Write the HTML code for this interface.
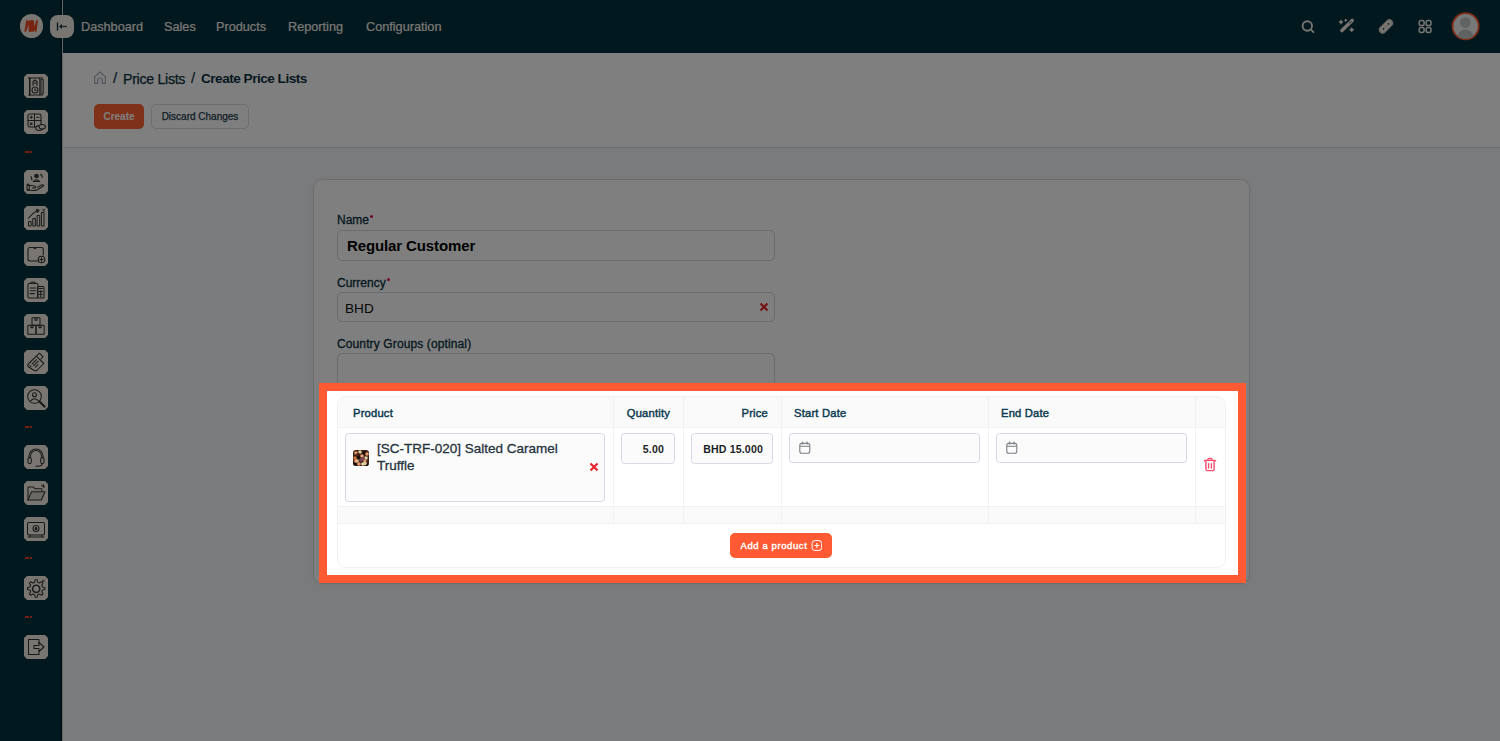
<!DOCTYPE html>
<html><head><meta charset="utf-8">
<style>
*{box-sizing:border-box;margin:0;padding:0}
html,body{width:1500px;height:741px;overflow:hidden;background:#f5f6f8;font-family:"Liberation Sans",sans-serif}
.abs{position:absolute}
#hdr{position:absolute;left:0;top:0;width:1500px;height:53px;background:#03303f}
#side{position:absolute;left:0;top:0;width:63px;height:741px;background:#03303f;border-right:1px solid #c4cdd1;box-shadow:inset -1.5px 0 0 rgba(0,0,0,0.35)}
.nav{position:absolute;top:20.2px;font-size:12.7px;color:#f2ede6;white-space:nowrap;-webkit-text-stroke:0.2px #f2ede6}
.tile{position:absolute;left:24px;width:24px;height:24px;background:#f3ede3;clip-path:polygon(3px 0,21px 0,24px 3px,24px 21px,21px 24px,3px 24px,0 21px,0 3px)}
.dash{position:absolute;left:25px;top:0;width:7px;height:2px;margin-top:0.5px;background:repeating-linear-gradient(90deg,#e0402a 0 1.8px,#5a2018 1.8px 2.4px)}
#crumbbar{position:absolute;left:63px;top:53px;width:1437px;height:95px;background:#fff;border-bottom:1px solid #dadce2}
.crumb{position:absolute;top:70px;font-size:13.5px;color:#0b3140;white-space:nowrap}
.btn{position:absolute;top:103.5px;height:25px;border-radius:5px;font-size:10px;line-height:22.5px;text-align:center;white-space:nowrap}
#card{position:absolute;left:313px;top:179px;width:937px;height:405px;border:1px solid #d6d9e0;border-radius:9px;background:#fff;box-shadow:0 1px 6px rgba(0,0,0,0.04)}
.lbl{position:absolute;left:337px;font-size:12px;color:#0b3140;white-space:nowrap;-webkit-text-stroke:0.3px #0b3140}
.req{position:absolute;width:3px;height:3px;border-radius:50%;background:#e0104a}
.inp{position:absolute;left:337px;width:438px;border:1px solid #d4d7dd;border-radius:5px;background:#fff}
#hl{position:absolute;left:319px;top:383px;width:927px;height:200px;border:8px solid #ff5a33;background:#fff;box-shadow:0 0 0 3000px rgba(0,0,0,0.5)}
#tbl{position:absolute;left:337px;top:396px;width:889px;height:172px;border:1px solid #eef0f3;border-radius:9px;background:#fff;overflow:hidden}
.vd{position:absolute;top:0;width:1px;height:127px;background:#f0f1f4}
.th{position:absolute;top:406.8px;font-size:11.2px;font-weight:normal;color:#0d3b4f;white-space:nowrap;-webkit-text-stroke:0.45px #0d3b4f;letter-spacing:0.2px}
.tin{position:absolute;border:1px solid #d5dae6;border-radius:3.5px;background:#fbfbfc}
.tv{top:442.6px;font-size:10.6px;font-weight:bold;color:#1b1f24;white-space:nowrap;letter-spacing:0.15px}
</style></head><body>
<div id="crumbbar"></div>
<div id="hdr"></div>
<div id="side"></div>
<div class="abs" style="left:19.5px;top:14.3px;width:23.5px;height:23.5px;border-radius:50%;background:#f3ede3"></div>
<svg class="abs" style="left:19px;top:14px" width="24" height="24" viewBox="0 0 24 24"><path d="M5.3 17.7L7.2 6.2H8.8L9.6 8.5V6.2H15V13L17.4 6.3H19L17.5 17.7H16L15 15.5V17.8H9.6V10.5L7 17.7z" fill="#ee4a20"/></svg>
<div class="abs" style="left:50px;top:14.5px;width:23.5px;height:23.5px;border-radius:8px;background:#f3ede3"></div>
<svg class="abs" style="left:50px;top:14px" width="24" height="24" viewBox="0 0 24 24"><path d="M7.5 8.5V16.5" stroke="#0f3346" stroke-width="1.4"/><path d="M9 12.5L12 10V15z" fill="#0f3346"/><path d="M11.5 12.5H17" stroke="#3a4a52" stroke-width="1.3"/></svg>
<div class="nav" style="left:81px">Dashboard</div>
<div class="nav" style="left:164px">Sales</div>
<div class="nav" style="left:216px">Products</div>
<div class="nav" style="left:288px">Reporting</div>
<div class="nav" style="left:366px">Configuration</div>
<svg class="abs" style="left:1290px;top:0px" width="210" height="53" viewBox="0 0 210 53">
<circle cx="17.3" cy="26" r="4.7" fill="none" stroke="#f0ebe4" stroke-width="1.9"/><path d="M20.9 29.6L23.5 32.2" stroke="#f0ebe4" stroke-width="1.8" stroke-linecap="round"/>
<path d="M51.9 30.6L62.2 20.4" stroke="#f0ebe4" stroke-width="3.5" stroke-linecap="round"/><path d="M60.9 21.6L59.4 23.1" stroke="#03303f" stroke-width="1" stroke-linecap="round"/>
<path d="M51 19.5Q51.728 21.372 53.6 22.1Q51.728 22.828000000000003 51 24.700000000000003Q50.272 22.828000000000003 48.4 22.1Q50.272 21.372 51 19.5z M55.7 18.5Q56.38 19.52 57.400000000000006 20.2Q56.38 20.88 55.7 21.9Q55.02 20.88 54.0 20.2Q55.02 19.52 55.7 18.5z M61.7 27.0Q62.484 29.016000000000002 64.5 29.8Q62.484 30.584 61.7 32.6Q60.916000000000004 30.584 58.900000000000006 29.8Q60.916000000000004 29.016000000000002 61.7 27.0z" fill="#f0ebe4"/>
<g transform="rotate(-45 96 26.4)"><rect x="87.5" y="22.6" width="17" height="7.6" rx="3.8" fill="#f0ebe4"/><rect x="88.2" y="23.3" width="15.6" height="6.2" rx="3.1" fill="none" stroke="#b9b4ad" stroke-width="0.6"/><circle cx="92.5" cy="26.4" r="0.8" fill="#03303f"/><circle cx="99.5" cy="26.4" r="0.8" fill="#03303f"/><path d="M94.5 26.4h3" stroke="#a8a39c" stroke-width="0.6"/></g>
<g fill="none" stroke="#f0ebe4" stroke-width="1.5"><rect x="129.2" y="20.6" width="4.9" height="4.9" rx="1.8"/><rect x="136.1" y="20.6" width="4.9" height="4.9" rx="1.8"/><rect x="129.2" y="27.5" width="4.9" height="4.9" rx="1.8"/><rect x="136.1" y="27.5" width="4.9" height="4.9" rx="1.8"/></g>
<defs><clipPath id="av"><circle cx="175.6" cy="26.3" r="12.8"/></clipPath></defs>
<circle cx="175.6" cy="26.3" r="13.1" fill="#eef1f1" stroke="#ff5a2e" stroke-width="1.8"/>
<g clip-path="url(#av)"><circle cx="175.3" cy="22.6" r="5.3" fill="#c2c5c5"/><ellipse cx="175.4" cy="37.5" rx="8" ry="8" fill="#c2c5c5"/></g>
</svg>

<div class="tile" style="top:74px"><svg class="abs" style="left:0px;top:0px" width="24" height="24" viewBox="0 0 24 24"><g fill="none" stroke="#333333" stroke-width="1.05" stroke-linecap="round" stroke-linejoin="round"><path d="M4.5 4H18.5M4.5 21H18.5"/><path d="M5.8 4V21" stroke-width="1.6"/><path d="M15.8 4V21"/><rect x="17" y="5" width="2.2" height="15" rx="1.1"/><circle cx="11" cy="16" r="3"/><path d="M11 14.5V16.2H12.3"/><path d="M9 11.5V7.5L11 6 13 7.5V11.5M9 9h4"/></g></svg></div><div class="tile" style="top:110px"><svg class="abs" style="left:0px;top:0px" width="24" height="24" viewBox="0 0 24 24"><g fill="none" stroke="#333333" stroke-width="1.05" stroke-linecap="round" stroke-linejoin="round"><rect x="4" y="4" width="13" height="13" rx="1.8"/><path d="M10.5 4V17M4 10.5H17M6.2 7.2h2.2M7.3 6.1v2.2M12.6 7.2h2.4M6.3 12.8l1.8 1.8M8.1 12.8l-1.8 1.8"/><ellipse cx="15.2" cy="18" rx="3.4" ry="2.4" fill="#f3ede3"/><ellipse cx="18.2" cy="16.8" rx="3.2" ry="2.3" fill="#f3ede3"/></g></svg></div><div class="tile" style="top:170px"><svg class="abs" style="left:0px;top:0px" width="24" height="24" viewBox="0 0 24 24"><g fill="none" stroke="#333333" stroke-width="1.05" stroke-linecap="round" stroke-linejoin="round"><circle cx="12.5" cy="6" r="1.8" fill="#333333"/><path d="M9.3 11.5q3.2-3.2 6.4 0H9.3z"/><path d="M16.5 4.2q2 1.2 1.7 3.2M7 6.5l1 3.5"/><path d="M4 15.5h3.5l3.5 .8q1.3.6.3 1.6H8.5"/><path d="M4 19.5q5 2 9.5.2l6.3-4.2q-.8-1.2-2.2-.6l-4 2.4"/><rect x="3" y="14" width="2.2" height="6.5" rx="1"/></g></svg></div><div class="tile" style="top:206px"><svg class="abs" style="left:0px;top:0px" width="24" height="24" viewBox="0 0 24 24"><g fill="none" stroke="#333333" stroke-width="1.05" stroke-linecap="round" stroke-linejoin="round"><rect x="4.5" y="15.5" width="2.6" height="4.5" rx=".6"/><rect x="8.8" y="12.5" width="2.6" height="7.5" rx=".6"/><rect x="13.1" y="9.5" width="2.6" height="10.5" rx=".6"/><rect x="17.4" y="6.5" width="2.6" height="13.5" rx=".6"/><path d="M4.5 12q4-5 9-7.5"/><path d="M12.5 3.5l2.5.8-1.6 2z" fill="#333333"/><path d="M19 3.5l1.5 1.5M20.5 3.5L19 5"/></g></svg></div><div class="tile" style="top:242px"><svg class="abs" style="left:0px;top:0px" width="24" height="24" viewBox="0 0 24 24"><g fill="none" stroke="#333333" stroke-width="1.05" stroke-linecap="round" stroke-linejoin="round"><path d="M6 5.5h11.5q1.8 0 1.8 1.8V13M6 5.5q-2 0-2 2v9.5q0 2 2 2h8"/><path d="M9.5 5.5q1.3 2.5 3 0"/><circle cx="17.5" cy="17.5" r="3.3"/><path d="M17.5 15.8v3.4M15.8 17.5h3.4"/></g></svg></div><div class="tile" style="top:278px"><svg class="abs" style="left:0px;top:0px" width="24" height="24" viewBox="0 0 24 24"><g fill="none" stroke="#333333" stroke-width="1.05" stroke-linecap="round" stroke-linejoin="round"><rect x="4" y="5.5" width="10" height="14.5" rx="1.2"/><path d="M6.5 5.5q.8-2.2 2.5-1.2 1.7-1 2.5 1.2M6.3 10h5.4M6.3 12.8h5.4M6.3 15.6h4"/><rect x="13.5" y="8.5" width="6.5" height="11.5" rx="1"/><path d="M15 10.5h3.5M15 13.5h3.5M15 16.3h3.5M16.8 12.5v6.5"/></g></svg></div><div class="tile" style="top:314px"><svg class="abs" style="left:0px;top:0px" width="24" height="24" viewBox="0 0 24 24"><g fill="none" stroke="#333333" stroke-width="1.05" stroke-linecap="round" stroke-linejoin="round"><rect x="8" y="3.8" width="8" height="7.5" rx=".5"/><rect x="3.8" y="11.3" width="8.2" height="9" rx=".5"/><rect x="12" y="11.3" width="8.2" height="9" rx=".5"/><path d="M11 3.8v2.5h2V3.8M6.9 11.3v2.3h2v-2.3M15.1 11.3v2.3h2v-2.3"/></g></svg></div><div class="tile" style="top:350px"><svg class="abs" style="left:0px;top:0px" width="24" height="24" viewBox="0 0 24 24"><g fill="none" stroke="#333333" stroke-width="1.05" stroke-linecap="round" stroke-linejoin="round"><path d="M3.8 14.5l8.5-8.3 7.5 7.3-6.5 6.5q-1.8 1.5-3.5.2l-5.5-3.5q-.8-1.2-.5-2.2z"/><path d="M12.5 6.2l3-3 3.5 3.5-2 2.3M8 14.2l4.5-4.5M9.7 15.7l4.5-4.5M11.4 17.2l2.5-2.5M5.8 15.5l1.2 1.2"/></g></svg></div><div class="tile" style="top:386px"><svg class="abs" style="left:0px;top:0px" width="24" height="24" viewBox="0 0 24 24"><g fill="none" stroke="#333333" stroke-width="1.05" stroke-linecap="round" stroke-linejoin="round" stroke-width="1.5"><circle cx="10.5" cy="10.5" r="6.8"/><path d="M15.5 15.5l5 5" stroke-width="2.2"/><circle cx="10.5" cy="8.8" r="2" stroke-width="1.1"/><path d="M7 14.5q3.5-3.5 7 0" stroke-width="1.1"/></g></svg></div><div class="tile" style="top:445px"><svg class="abs" style="left:0px;top:0px" width="24" height="24" viewBox="0 0 24 24"><g fill="none" stroke="#333333" stroke-width="1.05" stroke-linecap="round" stroke-linejoin="round"><path d="M5 13.5v-2.5a7 7 0 0 1 14 0v2.5"/><path d="M6.5 11.5v-.5a5.5 5.5 0 0 1 11 0v.5"/><rect x="4" y="12.5" width="3.3" height="6" rx="1.5"/><rect x="16.7" y="12.5" width="3.3" height="6" rx="1.5"/><path d="M18.3 18.5q0 2.7-5 2.7h-1.5"/></g></svg></div><div class="tile" style="top:481px"><svg class="abs" style="left:0px;top:0px" width="24" height="24" viewBox="0 0 24 24"><g fill="none" stroke="#333333" stroke-width="1.05" stroke-linecap="round" stroke-linejoin="round" stroke-width="1.4"><path d="M4 19V6h5.5l1.5 1.8h6.8V11"/><path d="M4 19l3.5-8.2h13.5l-3.6 8.2z" fill="#d8d2c8"/><path d="M17.5 4l2.5 2.5M19.5 3.5l.5 3"/></g></svg></div><div class="tile" style="top:517px"><svg class="abs" style="left:0px;top:0px" width="24" height="24" viewBox="0 0 24 24"><g fill="none" stroke="#333333" stroke-width="1.05" stroke-linecap="round" stroke-linejoin="round"><rect x="3.5" y="5.5" width="17" height="12.5" rx="1.2"/><path d="M4 20h16M6 18v2M18 18v2"/><circle cx="12" cy="11.5" r="3"/><circle cx="12" cy="11.5" r="1" fill="#333333"/></g></svg></div><div class="tile" style="top:576px"><svg class="abs" style="left:0px;top:0px" width="24" height="24" viewBox="0 0 24 24"><g fill="none" stroke="#333333" stroke-width="1.05" stroke-linecap="round" stroke-linejoin="round" stroke-width="1.2"><path d="M11.2 3.8h2l.5 2.4 1.8.8 2.1-1.3 1.4 1.4-1.3 2.1.8 1.8 2.4.5v2l-2.4.5-.8 1.8 1.3 2.1-1.4 1.4-2.1-1.3-1.8.8-.5 2.4h-2l-.5-2.4-1.8-.8-2.1 1.3-1.4-1.4 1.3-2.1-.8-1.8-2.4-.5v-2l2.4-.5.8-1.8-1.3-2.1 1.4-1.4 2.1 1.3 1.8-.8z"/><circle cx="12.2" cy="12.8" r="3.6" stroke-width="1.6"/><path d="M18.5 4l1.8 1.8M20.3 4l-1.8 1.8" stroke-width=".9"/></g></svg></div><div class="tile" style="top:635px"><svg class="abs" style="left:0px;top:0px" width="24" height="24" viewBox="0 0 24 24"><g fill="none" stroke="#333333" stroke-width="1.05" stroke-linecap="round" stroke-linejoin="round" stroke-width="1.4"><path d="M15 8.5V4.5H4.5v15H15v-4"/><path d="M10 10.5h5V7.5l5 4.5-5 4.5v-3h-5z"/></g></svg></div>
<div class="dash" style="top:150px"></div><div class="dash" style="top:425px"></div><div class="dash" style="top:556px"></div><div class="dash" style="top:615px"></div>

<svg class="abs" style="left:93px;top:69.5px" width="14" height="15" viewBox="0 0 14 15"><path d="M1.6 6.6L7 2 12.4 6.6V13Q12.4 13.4 12 13.4H9.3V10Q9.3 8 7 8 4.7 8 4.7 10V13.4H2Q1.6 13.4 1.6 13z" fill="none" stroke="#a8aebd" stroke-width="1.2" stroke-linejoin="round"/></svg>
<div class="crumb" style="left:113px;font-size:15px;top:69px;-webkit-text-stroke:0.2px #0b3140">/</div>
<div class="crumb" style="left:123px;font-size:14.2px;letter-spacing:-0.3px;top:70.5px;-webkit-text-stroke:0.25px #0b3140">Price Lists</div>
<div class="crumb" style="left:191px;font-size:15px;top:69px;-webkit-text-stroke:0.2px #0b3140">/</div>
<div class="crumb" style="left:201px;font-weight:bold;font-size:13.6px;letter-spacing:-0.5px;top:70.5px">Create Price Lists</div>
<div class="btn" style="left:94px;width:50px;background:#ff6233;color:#fff;font-weight:bold;border-radius:5px;line-height:26px">Create</div>
<div class="btn" style="left:151px;width:98px;border:1px solid #d6dae1;color:#1c3a4a;background:#fff;line-height:24px;-webkit-text-stroke:0.25px #1c3a4a">Discard Changes</div>

<div id="card"></div>
<div class="lbl" style="top:213px">Name</div><div class="req" style="left:370px;top:215px"></div>
<div class="inp" style="top:230px;height:31px"></div>
<div class="abs" style="left:347px;top:237px;font-size:15px;font-weight:bold;color:#000;white-space:nowrap;letter-spacing:-0.12px">Regular Customer</div>
<div class="lbl" style="top:276px">Currency</div><div class="req" style="left:386.5px;top:278px"></div>
<div class="inp" style="top:292px;height:30px"></div>
<div class="abs" style="left:345px;top:300.5px;font-size:13.6px;color:#111;white-space:nowrap">BHD</div>
<svg class="abs" style="left:759px;top:302px" width="10" height="10" viewBox="0 0 10 10"><path d="M1.5 1.5L8.5 8.5M8.5 1.5L1.5 8.5" stroke="#e8262a" stroke-width="2.2"/></svg>
<div class="lbl" style="top:337px;letter-spacing:0.12px">Country Groups (optinal)</div>
<div class="inp" style="top:353px;height:40px"></div>

<div id="hl"></div>
<div id="tbl">
  <div class="abs" style="left:0;top:0;width:889px;height:31px;background:#fafafb;border-bottom:1px solid #f0f1f4"></div>
  <div class="abs" style="left:0;top:109px;width:889px;height:18px;background:#fafafb;border-top:1px solid #f0f1f4;border-bottom:1px solid #f1f2f5"></div>
  <div class="vd" style="left:275px"></div>
  <div class="vd" style="left:345px"></div>
  <div class="vd" style="left:443px"></div>
  <div class="vd" style="left:650px"></div>
  <div class="vd" style="left:857px"></div>
</div>
<div class="th" style="left:353px">Product</div>
<div class="th" style="left:613px;width:57px;text-align:right">Quantity</div>
<div class="th" style="left:683px;width:85px;text-align:right">Price</div>
<div class="th" style="left:794px">Start Date</div>
<div class="th" style="left:1001px">End Date</div>

<div class="tin" style="left:345px;top:433px;width:260px;height:69px"></div>
<svg class="abs" style="left:353px;top:450px" width="16" height="16" viewBox="0 0 16 16"><defs><clipPath id="th"><rect width="16" height="16" rx="3"/></clipPath></defs><g clip-path="url(#th)"><rect width="16" height="16" fill="#3a1e14"/><circle cx="3" cy="3" r="1.8" fill="#e8966a"/><circle cx="7" cy="2" r="1.8" fill="#d9cf9c"/><circle cx="11" cy="3" r="1.8" fill="#1c0c08"/><circle cx="14" cy="4" r="1.8" fill="#e8966a"/><circle cx="2" cy="8" r="1.8" fill="#c8703e"/><circle cx="6" cy="7" r="1.8" fill="#1c0c08"/><circle cx="9" cy="6" r="1.8" fill="#f0a878"/><circle cx="13" cy="8" r="1.8" fill="#d9cf9c"/><circle cx="4" cy="11" r="1.8" fill="#d9cf9c"/><circle cx="8" cy="10" r="1.8" fill="#7a4858"/><circle cx="12" cy="11" r="1.8" fill="#e8966a"/><circle cx="15" cy="12" r="1.8" fill="#4a2418"/><circle cx="2" cy="14" r="1.8" fill="#1c0c08"/><circle cx="6" cy="14" r="1.8" fill="#e8966a"/><circle cx="10" cy="14" r="1.8" fill="#e9d8a8"/><circle cx="14" cy="15" r="1.8" fill="#1c0c08"/><circle cx="5" cy="4.5" r="1.8" fill="#4a2418"/><circle cx="10" cy="8.5" r="1.8" fill="#7a4858"/><circle cx="3" cy="11" r="1.8" fill="#f0a878"/><circle cx="12" cy="13.5" r="1.8" fill="#d9cf9c"/></g></svg>
<div class="abs" style="left:377px;top:440px;font-size:13.5px;line-height:17px;color:#26343c;width:220px;-webkit-text-stroke:0.3px #26343c">[SC-TRF-020] Salted Caramel<br>Truffle</div>
<svg class="abs" style="left:589px;top:462px" width="10" height="10" viewBox="0 0 10 10"><path d="M1.5 1.5L8.5 8.5M8.5 1.5L1.5 8.5" stroke="#e8262a" stroke-width="2.2"/></svg>

<div class="tin" style="left:621px;top:433px;width:54px;height:31px"></div>
<div class="abs tv" style="left:621px;width:43px;text-align:right">5.00</div>
<div class="tin" style="left:691px;top:433px;width:82px;height:31px"></div>
<div class="abs tv" style="left:691px;width:72px;text-align:right">BHD 15.000</div>

<div class="tin" style="left:789px;top:433px;width:191px;height:30px"></div>
<svg class="abs cal" style="left:799px;top:441px" width="12" height="13" viewBox="0 0 12 13"><rect x="0.8" y="2.4" width="10" height="9.8" rx="2" fill="none" stroke="#7c7f86" stroke-width="1.1"/><path d="M0.8 5.3H10.8M3.5 0.6V3.6M8.1 0.6V3.6" stroke="#7c7f86" stroke-width="1.1"/></svg>
<div class="tin" style="left:996px;top:433px;width:191px;height:30px"></div>
<svg class="abs cal" style="left:1006px;top:441px" width="12" height="13" viewBox="0 0 12 13"><rect x="0.8" y="2.4" width="10" height="9.8" rx="2" fill="none" stroke="#7c7f86" stroke-width="1.1"/><path d="M0.8 5.3H10.8M3.5 0.6V3.6M8.1 0.6V3.6" stroke="#7c7f86" stroke-width="1.1"/></svg>

<svg class="abs" style="left:1203px;top:457px" width="14" height="15" viewBox="0 0 14 15"><path d="M1.3 4Q1.6 3.3 2.5 3.3H11.5Q12.4 3.3 12.7 4" fill="none" stroke="#ff4d6d" stroke-width="1.3" stroke-linecap="round"/><path d="M4.6 3.3Q4.8 1.6 6 1.5H8Q9.2 1.6 9.4 3.3" fill="none" stroke="#ff4d6d" stroke-width="1.3"/><path d="M2.9 4V12.2Q2.9 13.6 4.3 13.6H9.7Q11.1 13.6 11.1 12.2V4" fill="none" stroke="#ff4d6d" stroke-width="1.4"/><path d="M5.6 6.6V11M8.4 6.6V11" stroke="#ff4d6d" stroke-width="1.3" stroke-linecap="round"/></svg>

<div class="abs" style="left:730px;top:533px;width:102px;height:25px;border-radius:5px;background:#ff5a33"></div>
<div class="abs" style="left:740.5px;top:540.3px;font-size:9.5px;font-weight:normal;color:#fff;white-space:nowrap;letter-spacing:0.6px;-webkit-text-stroke:0.4px #fff">Add a product</div>
<svg class="abs" style="left:811px;top:540px" width="11" height="11" viewBox="0 0 11 11"><rect x="1.1" y="0.6" width="9.6" height="9.8" rx="2.8" fill="none" stroke="#fff" stroke-width="1"/><path d="M5.9 3V8M3.4 5.5H8.4" stroke="#fff" stroke-width="1.1"/></svg>

</body></html>
